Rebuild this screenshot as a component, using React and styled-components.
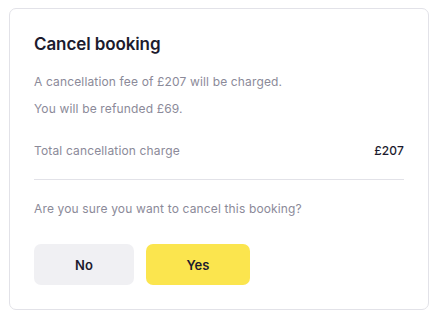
import React from "react";
import styled, { createGlobalStyle } from "styled-components";

const Global = createGlobalStyle`
  html, body { margin: 0; padding: 0; background: #ffffff; }
  body { font-family: Inter, "Noto Sans", sans-serif; -webkit-font-smoothing: antialiased; }
`;

const Page = styled.div`
  padding: 8px 9px;
`;

const Card = styled.div`
  box-sizing: border-box;
  width: 420px;
  height: 302px;
  border: 1px solid #e2e2e8;
  border-radius: 7px;
  padding: 24px 24px 24px 24px;
  display: flex;
  flex-direction: column;
`;

const Title = styled.h2`
  margin: 0;
  font-size: 17px;
  line-height: 22px;
  font-weight: 600;
  color: #1c1b2e;
  letter-spacing: -0.1px;
`;

const Text = styled.p`
  margin: ${(p) => p.$mt || 0}px 0 0;
  font-size: 12px;
  line-height: 16px;
  letter-spacing: 0.15px;
  color: #8b8a99;
`;

const Row = styled.div`
  display: flex;
  justify-content: space-between;
  align-items: center;
  margin-top: 26px;
  padding-bottom: 20px;
  border-bottom: 1px solid #e2e2e8;
  font-size: 12px;
  line-height: 16px;
  letter-spacing: 0.15px;
`;

const Label = styled.span`
  color: #8b8a99;
`;

const Amount = styled.span`
  color: #1c1b2e;
  font-weight: 500;
`;

const Buttons = styled.div`
  display: flex;
  gap: 12px;
  margin-top: 27px;
`;

const Button = styled.button`
  width: ${(p) => p.$w}px;
  height: 41px;
  border: none;
  border-radius: 7px;
  background: ${(p) => (p.$primary ? "#fbe54e" : "#f0f0f3")};
  color: #1c1b2e;
  font-family: inherit;
  font-size: 13px;
  font-weight: 600;
  cursor: pointer;
`;

export default function App() {
  return (
    <>
      <Global />
      <Page>
        <Card>
          <Title>Cancel booking</Title>
          <Text $mt={19}>A cancellation fee of £207 will be charged.</Text>
          <Text $mt={11}>You will be refunded £69.</Text>
          <Row>
            <Label>Total cancellation charge</Label>
            <Amount>£207</Amount>
          </Row>
          <Text $mt={21}>Are you sure you want to cancel this booking?</Text>
          <Buttons>
            <Button $w={100}>No</Button>
            <Button $w={104} $primary>Yes</Button>
          </Buttons>
        </Card>
      </Page>
    </>
  );
}
